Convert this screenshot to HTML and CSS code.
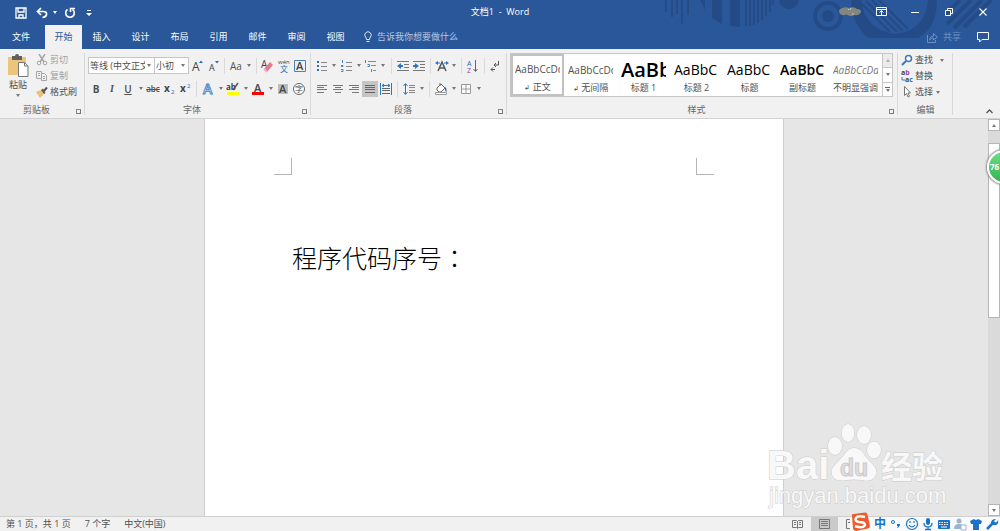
FILE: index.html
```html
<!DOCTYPE html>
<html lang="zh-CN">

<head>
    <meta charset="UTF-8">
    <meta name="viewport" content="width=device-width, initial-scale=1.0">
    <title>文档1 - Word</title>
    <link rel="stylesheet" href="styles.css">
</head>

<body>
    <header class="header">
        <svg class="pattern" width="350" height="49" viewBox="0 0 350 49">
            <g fill="none" stroke="#244b85" stroke-width="3">
                <path d="M16 0v12M22 0v17M27 0v14M32 0v24M38 0v15" stroke-width="2"></path>
                <path d="M96 0v26M100 0v26M104 0v25M108 0v23M112 0v20M116 0v16M120 0v12M123 0v5" stroke-width="2"></path>
                <circle cx="178" cy="16" r="13" stroke-width="4"></circle>
                <path d="M296 14l14-14M297 24l24-24M304 28l28-28M314 27l27-27" stroke-width="4"></path>
            </g>
            <g fill="#244b85">
                <path d="M50 0h5v10zM62 0h10v24l-10-6zM80 0h10v27l-10-1z"></path>
                <path d="M129 0h20a10 9 0 0 1-20 0z"></path>
                <circle cx="178" cy="16" r="6"></circle>
                <path d="M201 0h10q4 30 34 34q30-3 33-34h9q0 28-19 38h-49q-17-12-18-38z"></path>
            </g>
            <path d="M211 3l29 29M216 1l31 31M222 0l31 31M229 0l29 29" fill="none" stroke="#244b85" stroke-width="2"></path>
        </svg>
        <div class="titlebar">
            <div class="quick">
                <button class="save" aria-label="保存"><svg width="12" height="12" viewBox="0 0 12 12"><path d="M1 1h10v10H1zM3 1v4h6V1M4 11V8h4v3" fill="none" stroke="#fff" stroke-width="1.3"></path></svg></button>
                <button aria-label="撤消"><svg width="12" height="12" viewBox="0 0 12 12"><path d="M5 1L1.500 4.500L5 8M2 4.500h5q4 0 3.500 3q-.5 2.500-4 3" fill="none" stroke="#fff" stroke-width="1.700"></path></svg></button>
                <button class="drop light" aria-label="撤消选项"></button>
                <button class="redo" aria-label="重复"><svg width="12" height="12" viewBox="0 0 12 12"><path d="M3.500 2.500a4.300 4.300 0 1 0 5 0M6.500 5V1.500H11" fill="none" stroke="#fff" stroke-width="1.600"></path></svg></button>
                <button class="custom" aria-label="自定义快速访问工具栏"><svg width="6" height="6" viewBox="0 0 6 6"><path d="M1 0h4v1H1zM0 3h6L3 6z" fill="#fff"></path></svg></button>
            </div>
            <h1>文档1  -  Word</h1>
            <div class="winctl">
                <svg class="user" width="22" height="10" viewBox="0 0 22 10"><path d="M1 2q5-3 9-1q5-2 8 1q5 0 3.500 4q-2 3-6 2q-4 2-8-.5Q3 9 1 7q-2-3 0-5z" fill="#85857f"></path><path d="M9 2l1 1M12 1l-1 2M13 7h2" stroke="#c5c5c0"></path></svg>
                <button aria-label="功能区显示选项"><svg width="11" height="9" viewBox="0 0 11 9"><path d="M.5 .5h10v8H.5zM.5 2.500h10M5.500 8V4M3.500 5.500l2-2l2 2" fill="none" stroke="#fff"></path></svg></button>
                <button aria-label="最小化"><svg width="8" height="8" viewBox="0 0 8 8"><path d="M0 4.500h8" stroke="#fff"></path></svg></button>
                <button aria-label="还原"><svg width="8" height="8" viewBox="0 0 8 8"><path d="M.5 2.500h5v5h-5zM2.500 2V.5h5v5H6" fill="none" stroke="#fff"></path></svg></button>
                <button aria-label="关闭"><svg width="8" height="8" viewBox="0 0 8 8"><path d="M.5 .5l7 7M7.500 .5l-7 7" stroke="#fff" stroke-width="1.100"></path></svg></button>
            </div>
        </div>
        <nav class="tabs">
            <button class="file">文件</button>
            <button class="active">开始</button>
            <button>插入</button>
            <button>设计</button>
            <button>布局</button>
            <button>引用</button>
            <button>邮件</button>
            <button>审阅</button>
            <button>视图</button>
            <label class="tellme">
                <svg width="8" height="12" viewBox="0 0 8 12"><path d="M2.500 8.500q0-1.500-1-2.500a3.200 3.200 0 1 1 5 0q-1 1-1 2.500zM2.500 10.500h3" fill="none" stroke="#dce5f3"></path></svg>
                <input type="text" placeholder="告诉我你想要做什么" aria-label="告诉我你想要做什么">
            </label>
            <button class="share"><svg width="11" height="11" viewBox="0 0 11 11"><path d="M.5 3v7.500h8V8M2.500 8q.5-4 4-4V1.500l4 3.500l-4 3V6q-2.500 0-4 2z" fill="none" stroke="#6d8fc2"></path></svg>共享</button>
            <button class="comment" aria-label="批注"><svg width="12" height="11" viewBox="0 0 12 11"><path d="M.5 .5h11v7H5l-2.500 2.500V7.500h-2z" fill="none" stroke="#fff"></path></svg></button>
        </nav>
    </header>

    <section class="ribbon">
        <div class="group clipboard">
            <div class="group-body">
                <button class="paste">
                    <svg width="22" height="24" viewBox="0 0 22 24"><path d="M1 3h18v18H1z" fill="#edc47c"></path><path d="M5 2h3q0-2 2-2t2 2h3v4H5z" fill="#606060"></path><path d="M11.500 8.500h6l3.500 3.500v10.500h-9.500z" fill="#fff" stroke="#777"></path><path d="M17.500 8.500v3.500h3.500" fill="none" stroke="#777"></path></svg>
                    <span>粘贴</span>
                    <i class="tri"></i>
                </button>
                <div class="stack">
                    <button class="off"><svg width="12" height="12" viewBox="0 0 12 12"><path d="M3 0l5 8M9 0L4 8" stroke="#a5a5a5" stroke-width="1.500"></path><g fill="none" stroke="#a5a5a5"><circle cx="3" cy="9" r="1.800"></circle><circle cx="9" cy="9" r="1.800"></circle></g></svg>剪切</button>
                    <button class="off"><svg width="12" height="12" viewBox="0 0 12 12"><path d="M.5 1.500h5v7h-5zM5.500 3.500h3l2 2v5h-5zM2 3.500h2M2 5.500h2M7 6.500h2M7 8.500h2" fill="#f1f1f1" stroke="#a5a5a5"></path></svg>复制</button>
                    <button><svg width="12" height="12" viewBox="0 0 12 12"><path d="M0 6l5-2l3 4l-4 4z" fill="#edc07a"></path><path d="M5 4l3 4l1.500-1L7 2.500z" fill="#555"></path><path d="M8 5l3-3.500" stroke="#555" stroke-width="2"></path></svg>格式刷</button>
                </div>
            </div>
            <div class="label">剪贴板<button class="launch" aria-label="剪贴板设置"></button></div>
        </div>

        <div class="group font">
            <div class="group-body rows">
                <div class="row">
                    <span class="combo name"><select aria-label="字体"><option>等线 (中文正文)</option></select></span>
                    <span class="combo size"><select aria-label="字号"><option>小初</option></select></span>
                    <button class="ib" aria-label="增大字号"><svg viewBox="0 0 16 16"><text x="3" y="13" font-size="12">A</text><path d="M10 5l2-2.500L14 5z" fill="#2b6cb5"></path></svg></button>
                    <button class="ib" aria-label="减小字号"><svg viewBox="0 0 16 16"><text x="4" y="13" font-size="9">A</text><path d="M10 3l2 2.500L14 3z" fill="#2b6cb5"></path></svg></button>
                    <i class="sep"></i>
                    <button class="ib" aria-label="更改大小写">Aa</button><button class="drop" aria-label="大小写选项"></button>
                    <i class="sep"></i>
                    <button class="ib" aria-label="清除格式"><svg viewBox="0 0 16 16"><text x="1" y="10" font-size="10">A</text><path d="M4 11l6-7l3 3l-6 7z" fill="#e8798c"></path><path d="M4 11l3 3" stroke="#f3b9c2" stroke-width="2"></path></svg></button>
                    <button class="ib" aria-label="拼音指南"><svg viewBox="0 0 16 16"><text x="2" y="6" font-size="6">wén</text><text x="4" y="14" font-size="8" class="blue">文</text></svg></button>
                    <button class="ib" aria-label="字符边框"><svg viewBox="0 0 16 16"><path d="M2.500 2.500h11v11h-11z" fill="none" stroke="#4a7fbd"></path><text x="4" y="12" font-size="11" font-weight="600">A</text></svg></button>
                </div>
                <div class="row">
                    <button class="ib bold">B</button>
                    <button class="ib italic">I</button>
                    <button class="ib under">U</button><button class="drop" aria-label="下划线选项"></button>
                    <button class="ib strike">abc</button>
                    <button class="ib" aria-label="下标"><svg viewBox="0 0 16 16"><text x="3" y="11" font-size="10" font-weight="700">x</text><text x="10" y="13" font-size="6" class="blue">2</text></svg></button>
                    <button class="ib" aria-label="上标"><svg viewBox="0 0 16 16"><text x="3" y="11" font-size="10" font-weight="700">x</text><text x="10" y="7" font-size="6" class="blue">2</text></svg></button>
                    <i class="sep"></i>
                    <button class="ib" aria-label="文本效果"><svg viewBox="0 0 16 16"><text x="3" y="13" font-size="14" font-weight="600" class="effect">A</text></svg></button><button class="drop" aria-label="文本效果选项"></button>
                    <button class="ib" aria-label="突出显示"><svg viewBox="0 0 16 16"><text x="1" y="9" font-size="8" font-weight="700">ab</text><path d="M8 9l5-7" stroke="#555" stroke-width="1.500"></path><path d="M2 11h12v3H2z" fill="#ffff00"></path></svg></button><button class="drop" aria-label="突出显示选项"></button>
                    <button class="ib" aria-label="字体颜色"><svg viewBox="0 0 16 16"><text x="4" y="11" font-size="11" font-weight="600">A</text><path d="M2 11h12v3H2z" fill="#ff0000"></path></svg></button><button class="drop" aria-label="字体颜色选项"></button>
                    <button class="ib" aria-label="字符底纹"><svg viewBox="0 0 16 16"><path d="M3 3h10v10H3z" fill="#bcbcbc"></path><text x="4" y="12" font-size="11" font-weight="600">A</text></svg></button>
                    <button class="ib" aria-label="带圈字符"><svg viewBox="0 0 16 16"><circle cx="8" cy="8" r="5.500" fill="#fff" stroke="#666"></circle><text x="4" y="11" font-size="8">字</text></svg></button>
                </div>
            </div>
            <div class="label">字体<button class="launch" aria-label="字体设置"></button></div>
        </div>

        <div class="group para">
            <div class="group-body rows">
                <div class="row">
                    <button class="ib" aria-label="项目符号"><svg viewBox="0 0 16 16"><path d="M3 3h2v2H3zM3 7h2v2H3zM3 11h2v2H3z" fill="#2b6cb5"></path><path d="M7 4.500h6M7 8.500h6M7 12.500h6" stroke="#888"></path></svg></button><button class="drop" aria-label="项目符号选项"></button>
                    <button class="ib" aria-label="编号"><svg viewBox="0 0 16 16"><path d="M3.500 2v3M2 7.500h2v1H2M2 11.500h2v2H2" fill="none" stroke="#4a86c5"></path><path d="M7 4.500h6M7 8.500h6M7 12.500h6" stroke="#888"></path></svg></button><button class="drop" aria-label="编号选项"></button>
                    <button class="ib" aria-label="多级列表"><svg viewBox="0 0 16 16"><path d="M2.500 2v3M4.500 6.500h2v2h-2M8.500 11v3" fill="none" stroke="#4a86c5"></path><path d="M5 3.500h8M8 7.500h5M10 12.500h3" stroke="#888"></path></svg></button><button class="drop" aria-label="多级列表选项"></button>
                    <i class="sep"></i>
                    <button class="ib" aria-label="减少缩进量"><svg viewBox="0 0 16 16"><path d="M2 3.500h12M9 6.500h5M9 9.500h5M2 12.500h12" stroke="#777"></path><path d="M2 8l4-3v2h2v2H6v2z" fill="#2b78c2"></path></svg></button>
                    <button class="ib" aria-label="增加缩进量"><svg viewBox="0 0 16 16"><path d="M2 3.500h12M9 6.500h5M9 9.500h5M2 12.500h12" stroke="#777"></path><path d="M8 8L4 5v2H2v2h2v2z" fill="#2b78c2"></path></svg></button>
                    <i class="sep"></i>
                    <button class="ib" aria-label="中文版式"><svg viewBox="0 0 16 16"><path d="M4 13l4-9l4 9M5.500 10h5" fill="none" stroke="#555" stroke-width="1.500"></path><path d="M1 5l3-2v4zM15 5l-3-2v4z" fill="#2b78c2"></path><path d="M3 5h3M10 5h3" stroke="#2b78c2"></path></svg></button><button class="drop" aria-label="中文版式选项"></button>
                    <i class="sep"></i>
                    <button class="ib" aria-label="排序"><svg viewBox="0 0 16 16"><text x="2" y="8" font-size="7" class="blue">A</text><text x="2" y="15" font-size="7" class="purple">Z</text><path d="M10.500 2v11M8.500 11l2 2.500l2-2.500" fill="none" stroke="#666"></path></svg></button>
                    <i class="sep"></i>
                    <button class="ib" aria-label="显示编辑标记"><svg viewBox="0 0 16 16"><path d="M10.500 3v4H6M8 5L6 7l2 2M7 11.500H3M5 9.500l-2 2l2 2" fill="none" stroke="#555"></path></svg></button>
                </div>
                <div class="row">
                    <button class="ib" aria-label="左对齐"><svg viewBox="0 0 16 16"><path d="M3 4.500h10M3 6.500h7M3 8.500h10M3 11.500h7" stroke="#777"></path></svg></button>
                    <button class="ib" aria-label="居中"><svg viewBox="0 0 16 16"><path d="M3 4.500h10M5 6.500h6M3 8.500h10M5 11.500h6" stroke="#777"></path></svg></button>
                    <button class="ib" aria-label="右对齐"><svg viewBox="0 0 16 16"><path d="M3 4.500h10M6 6.500h7M3 8.500h10M6 11.500h7" stroke="#777"></path></svg></button>
                    <button class="ib pressed" aria-label="两端对齐"><svg viewBox="0 0 16 16"><path d="M3 4.500h10M3 6.500h10M3 8.500h10M3 11.500h10" stroke="#666"></path></svg></button>
                    <button class="ib" aria-label="分散对齐"><svg viewBox="0 0 16 16"><path d="M2.500 2v12M13.500 2v12M4 4.500h8M6 3l-2 1.500L6 6M10 3l2 1.500L10 6" fill="none" stroke="#2b78c2"></path><path d="M4 7.500h8M4 9.500h8M4 12.500h8" stroke="#666"></path></svg></button>
                    <i class="sep"></i>
                    <button class="ib" aria-label="行距"><svg viewBox="0 0 16 16"><path d="M4.500 3v10M2.500 5l2-2.500l2 2.500M2.500 11l2 2.500l2-2.500" fill="none" stroke="#2b78c2"></path><path d="M8 4.500h6M8 6.500h6M8 9.500h6M8 11.500h6" stroke="#888"></path></svg></button><button class="drop" aria-label="行距选项"></button>
                    <i class="sep"></i>
                    <button class="ib" aria-label="底纹"><svg viewBox="0 0 16 16"><path d="M4 7l4-4l4 4l-4 4H6L4 9zM7 5V2" fill="#fff" stroke="#666"></path><path d="M12 6q2 1 1.500 5q-2-1-1.500-5z" fill="#2b6cb5"></path><path d="M2.500 11.500h11v2h-11z" fill="#fff" stroke="#999"></path></svg></button><button class="drop" aria-label="底纹选项"></button>
                    <button class="ib" aria-label="边框"><svg viewBox="0 0 16 16"><path d="M3.500 3.500h9v9h-9zM8 4v8M4 8h8" fill="#fff" stroke="#999"></path></svg></button><button class="drop" aria-label="边框选项"></button>
                </div>
            </div>
            <div class="label">段落<button class="launch" aria-label="段落设置"></button></div>
        </div>

        <div class="group styles">
            <div class="group-body">
                <div class="gallery">
                    <button class="style selected"><span class="sample">AaBbCcDd</span><span class="cap"><small>↲</small> 正文</span></button>
                    <button class="style"><span class="sample">AaBbCcDd</span><span class="cap"><small>↲</small> 无间隔</span></button>
                    <button class="style"><span class="sample big">AaBb</span><span class="cap">标题 1</span></button>
                    <button class="style"><span class="sample mid">AaBbC</span><span class="cap">标题 2</span></button>
                    <button class="style"><span class="sample mid">AaBbC</span><span class="cap">标题</span></button>
                    <button class="style"><span class="sample mid heavy">AaBbC</span><span class="cap">副标题</span></button>
                    <button class="style"><span class="sample slant">AaBbCcDd</span><span class="cap">不明显强调</span></button>
                    <div class="spin">
                        <button class="dim" aria-label="上一行"><i class="tri up"></i></button>
                        <button aria-label="下一行"><i class="tri"></i></button>
                        <button class="more" aria-label="其他"><i class="tri"></i></button>
                    </div>
                </div>
            </div>
            <div class="label">样式<button class="launch" aria-label="样式设置"></button></div>
        </div>

        <div class="group edit">
            <div class="group-body">
                <div class="stack">
                    <button><svg width="12" height="12" viewBox="0 0 12 12"><circle cx="7.500" cy="4.500" r="3" fill="#fff" stroke="#3b78bd" stroke-width="1.500"></circle><path d="M5 7l-4 4" stroke="#3b78bd" stroke-width="2"></path></svg>查找<i class="tri far"></i></button>
                    <button><svg width="12" height="12" viewBox="0 0 12 12"><text x="0" y="5" font-size="7" font-weight="700">a<tspan class="purple">b</tspan></text><text x="4" y="12" font-size="7" font-weight="700">a<tspan class="blue">c</tspan></text><path d="M1 7v3h3" fill="none" stroke="#3b78bd"></path></svg>替换</button>
                    <button><svg width="12" height="12" viewBox="0 0 12 12"><path d="M3.500 .5v9l2-2l1.500 3.500l1.500-.7L7 7h2.500z" fill="#fff" stroke="#777"></path></svg>选择<i class="tri"></i></button>
                </div>
            </div>
            <div class="label">编辑</div>
        </div>
        <button class="collapse" aria-label="折叠功能区"><svg width="7" height="5" viewBox="0 0 7 5"><path d="M.5 4l3-3l3 3" fill="none" stroke="#555" stroke-width="1.300"></path></svg></button>
    </section>

    <main class="workspace">
        <div class="canvas">
            <article class="page">
                <div class="crops"><i class="crop left"></i><i class="crop right"></i></div>
                <p>程序代码序号<span class="punct" lang="zh-TW">：</span></p>
            </article>
        </div>
        <div class="scroll">
            <button aria-label="向上滚动"><i class="tri up"></i></button>
            <div class="thumb"></div>
            <button class="down" aria-label="向下滚动"><i class="tri"></i></button>
        </div>
        <div class="ball">76</div>
        <svg class="watermark" width="190" height="95" viewBox="0 0 190 95">
            <g class="mark">
                <text x="2" y="59" font-size="40" font-weight="700">Bai</text>
                <ellipse cx="70" cy="26" rx="7" ry="9"></ellipse>
                <ellipse cx="83" cy="13" rx="6.500" ry="9"></ellipse>
                <ellipse cx="99" cy="15" rx="7" ry="9"></ellipse>
                <ellipse cx="109" cy="30" rx="7" ry="8.500"></ellipse>
                <path d="M89 28q7 0 11 8l9 10q5 7 0 12q-4 4-12 2q-8-1-16 0q-9 2-13-3q-4-6 2-12l9-10q4-7 10-7z"></path>
                <text x="116" y="58" font-size="31" font-weight="700">经验</text>
                <text x="4" y="83" font-size="22">jingyan.baidu.com</text>
            </g>
            <text class="du" x="75" y="56" font-size="23" font-weight="700">du</text>
        </svg>
    </main>

    <footer class="status">
        <span>第 1 页，共 1 页</span>
        <span>7 个字</span>
        <span>中文(中国)</span>
        <div class="views">
            <button aria-label="阅读视图"><svg width="11" height="10" viewBox="0 0 11 10"><path d="M.5 1.500h4l1 1l1-1h4v7h-4l-1 1l-1-1h-4zM5.500 2v7M2 3.500h2M2 5.500h2M7 3.500h2M7 5.500h2" fill="none" stroke="#777"></path></svg></button>
            <button class="on" aria-label="页面视图"><svg width="11" height="10" viewBox="0 0 11 10"><path d="M.5 .5h10v9H.5zM2 2.500h7M2 4.500h7M2 6.500h7" fill="none" stroke="#777"></path></svg></button>
            <button aria-label="Web 版式视图"><svg width="11" height="10" viewBox="0 0 11 10"><path d="M.5 .5h10v9H.5zM2 3.500h7" fill="none" stroke="#777"></path></svg></button>
        </div>
        <div class="ime">
            <button class="sogou" aria-label="搜狗输入法"><svg width="20" height="19" viewBox="0 0 20 19"><path d="M2 4Q1 2 4 2l11-1.500q2 0 2.500 2L20 14q0 2-2 2.500L6 19q-2 0-3-2z" fill="#f1592a"></path><path d="M15 5Q8 3 6 6t3 4q6 0 6 3q-2 4-10 1" fill="none" stroke="#fff" stroke-width="2.500"></path></svg></button>
            <button class="cn">中</button>
            <button aria-label="标点"><svg viewBox="0 0 14 14"><circle cx="4" cy="5" r="1.500" fill="none" stroke="#1a73c8"></circle><path d="M8 7h3q0 3-3 4l1-2H8z" fill="#1a73c8"></path></svg></button>
            <button aria-label="表情"><svg viewBox="0 0 14 14"><g fill="none" stroke="#1a73c8" stroke-width="1.200"><circle cx="7" cy="7" r="5.500"></circle><path d="M4 8q3 4 6 0M5 4v2M9 4v2"></path></g></svg></button>
            <button aria-label="语音"><svg viewBox="0 0 14 14"><rect x="5" y="1" width="4" height="7" rx="2" fill="#1a73c8"></rect><path d="M3 6q0 4 4 4t4-4M7 10v3M4 12.500h6" fill="none" stroke="#1a73c8" stroke-width="1.300"></path></svg></button>
            <button aria-label="软键盘"><svg viewBox="0 0 14 14"><rect x="1" y="3" width="12" height="9" rx="1" fill="#1a73c8"></rect><path d="M2 5.500h10M2 7.500h10" stroke="#fff" stroke-dasharray="1.500 1"></path><path d="M4 10h6" stroke="#fff"></path></svg></button>
            <button aria-label="账号"><svg viewBox="0 0 14 14"><circle cx="6" cy="4" r="2.500" fill="#9db4d0"></circle><path d="M1 12q0-5 5-5t5 5z" fill="#9db4d0"></path><path d="M8 8h5v5H8z" fill="#fff" stroke="#9db4d0"></path></svg></button>
            <button aria-label="皮肤"><svg viewBox="0 0 14 14"><path d="M5 2q2 2 4 0l4 2l-1 3h-2v6H4V7H2L1 4z" fill="#1a73c8"></path></svg></button>
            <button aria-label="工具箱"><svg viewBox="0 0 14 14"><path d="M2 12l6-6" stroke="#1a73c8" stroke-width="2.500"></path><path d="M11 2L9 4l1 1.500L12 5l1-2q1 4-2 5t-5-2q0-4 5-4z" fill="#1a73c8"></path></svg></button>
        </div>
    </footer>
</body>

</html>
```
FILE: styles.css
```css
* {
    box-sizing: border-box;
    margin: 0;
    padding: 0;
}

body {
    display: flex;
    flex-direction: column;
    height: 100vh;
    overflow: hidden;
    font: 9px/12px "Open Sans", "Noto Sans CJK SC", sans-serif;
    color: #505050;
    background-color: #e6e6e6;
}

button,
input,
select {
    font: inherit;
    color: inherit;
    border: none;
    background: none;
}

button {
    display: flex;
    align-items: center;
    justify-content: center;
    white-space: nowrap;
}

svg {
    display: block;
    flex: none;
}

/* 标题栏 */
.header {
    position: relative;
    flex: none;
    background-color: #2a579a;
    color: #fff;
}

.pattern {
    position: absolute;
    top: 0;
    right: 0;
}

.titlebar {
    position: relative;
    display: grid;
    grid-template-columns: 1fr auto 1fr;
    align-items: center;
    height: 25px;
}

.titlebar h1 {
    font-size: 9px;
    font-weight: 400;
    white-space: pre;
    padding-bottom: 2px;
}

.quick {
    display: flex;
    padding-left: 15px;
}

.save {
    margin-right: 9px;
}

.redo {
    margin-left: 3px;
}

.custom {
    margin-left: 10px;
}

.winctl {
    display: flex;
    justify-content: flex-end;
    align-items: center;
    padding-bottom: 2px;
}

.winctl button {
    width: 34px;
    height: 22px;
}

.user {
    margin-right: 3px;
}

.tabs {
    position: relative;
    display: flex;
    height: 24px;
}

.tabs button {
    width: 39px;
    height: 24px;
}

.tabs .file {
    width: 45px;
    padding-right: 3px;
}

.tabs .active {
    width: 37px;
    background-color: #f1f1f1;
    color: #2a579a;
}

.tellme {
    display: flex;
    align-items: center;
    gap: 5px;
    margin-left: 9px;
}

.tellme input {
    width: 120px;
}

.tellme input::placeholder {
    color: #b8c8e2;
}

.tabs .share {
    width: auto;
    gap: 5px;
    margin-left: auto;
    color: #6d8fc2;
}

.tabs .comment {
    width: 34px;
    margin-left: 5px;
}

/* 小三角 */
.tri,
.drop::after,
.combo::after {
    content: "";
    display: block;
    flex: none;
    border: 2px solid transparent;
    border-top: 3px solid #777;
    border-bottom: 0;
}

.tri.up {
    border-top: 0;
    border-bottom: 3px solid #777;
}

.drop {
    width: 9px;
    height: 16px;
}

.drop.light::after {
    border-top-color: #fff;
}

.quick .drop {
    height: 12px;
    margin: 0 2px;
}

/* 功能区 */
.ribbon {
    display: flex;
    flex: none;
    background-color: #f1f1f1;
    border-bottom: 1px solid #d2d2d2;
}

.group {
    position: relative;
    flex: none;
    padding: 0 3px;
}

.group::after {
    content: "";
    position: absolute;
    top: 4px;
    right: 0;
    bottom: 3px;
    width: 1px;
    background-color: #d8d8d8;
}

.group-body {
    display: flex;
    height: 51px;
}

.rows {
    flex-direction: column;
    justify-content: flex-end;
}

.row {
    display: flex;
    align-items: center;
    height: 23px;
}

.label {
    display: flex;
    justify-content: center;
    align-items: center;
    height: 18px;
    padding: 2px 12px 0 0;
    color: #666;
}

.launch {
    position: absolute;
    right: 4px;
    bottom: 4px;
    width: 5px;
    height: 5px;
    border-top: 1px solid #888;
    border-left: 1px solid #888;
}

.launch::after {
    content: "";
    position: absolute;
    right: 0;
    bottom: 0;
    width: 3px;
    height: 3px;
    border-right: 1px solid #777;
    border-bottom: 1px solid #777;
}

.clipboard {
    width: 85px;
}

.clipboard .group-body {
    gap: 3px;
}

.paste {
    flex-direction: column;
    justify-content: flex-start;
    width: 30px;
    padding-top: 5px;
}

.paste span {
    line-height: 14px;
}

.paste .tri {
    margin-top: 2px;
}

.stack {
    display: flex;
    flex-direction: column;
    padding-top: 3px;
}

.stack button {
    justify-content: flex-start;
    gap: 2px;
    height: 16px;
}

.stack .tri {
    margin-left: 1px;
}

.stack .tri.far {
    margin-left: 5px;
}

.stack .off {
    color: #a0a0a0;
}

.ib {
    width: 16px;
    height: 16px;
    font-size: 10px;
}

.ib svg {
    width: 16px;
    height: 16px;
}

svg text {
    fill: #444;
}

svg .blue {
    fill: #2b6cb5;
}

svg .purple {
    fill: #8c4aa8;
}

svg .effect {
    fill: #fff;
    stroke: #4a86c5;
}

.bold {
    font-weight: 700;
}

.italic {
    font-family: "Liberation Serif", serif;
    font-style: italic;
    font-weight: 700;
}

.under {
    font-weight: 600;
    text-decoration: underline;
}

.strike {
    font-size: 8px;
    font-weight: 600;
    text-decoration: line-through;
}

.pressed {
    background-color: #c5c5c5;
}

.sep {
    width: 1px;
    height: 16px;
    margin: 0 3px;
    background-color: #dadada;
}

.combo {
    position: relative;
    height: 17px;
    border: 1px solid #c6c6c6;
    background-color: #fff;
}

.combo::after {
    position: absolute;
    top: 6px;
    right: 3px;
}

.combo select {
    appearance: none;
    display: block;
    height: 15px;
    padding-left: 1px;
}

.combo.name {
    width: 67px;
}

.combo.name select {
    width: 56px;
}

.combo.size {
    width: 34px;
    border-left: 0;
}

.combo.size select {
    width: 33px;
}

.font {
    width: 226px;
}

.para {
    width: 196px;
}

.styles {
    flex: 0 1 391px;
    min-width: 0;
}

.gallery {
    display: flex;
    flex: 1;
    min-width: 0;
    height: 44px;
    margin: 4px 2px 0 0;
    background-color: #fff;
    border: 1px solid #c6c6c6;
}

.style {
    flex: 1 1 0;
    flex-direction: column;
    align-items: stretch;
    min-width: 0;
    padding: 0 4px;
}

.style.selected {
    padding: 0 2px;
    border: 2px solid #c1c1c1;
}

.sample {
    height: 26px;
    font-size: 10px;
    line-height: 28px;
    text-align: left;
    overflow: hidden;
}

.selected .sample {
    height: 24px;
    line-height: 24px;
}

.sample.big {
    font-size: 20px;
    font-weight: 600;
    color: #000;
}

.sample.mid {
    font-size: 14px;
    color: #000;
}

.sample.heavy {
    font-weight: 600;
}

.sample.slant {
    font-style: italic;
    color: #777;
}

.cap small {
    font-size: 7px;
}

.spin {
    display: flex;
    flex: none;
    flex-direction: column;
    width: 10px;
    border-left: 1px solid #c6c6c6;
}

.spin button {
    flex: 1;
    flex-direction: column;
}

.spin button + button {
    border-top: 1px solid #c6c6c6;
}

.spin .dim {
    background-color: #e1e1e1;
    opacity: .6;
}

.spin .more::before {
    content: "";
    width: 5px;
    height: 1px;
    margin-bottom: 1px;
    background-color: #666;
}

.edit {
    width: 55px;
}

.edit .label {
    padding-right: 0;
}

.collapse {
    align-self: flex-end;
    margin-left: auto;
    padding: 4px 7px;
}

/* 编辑区 */
.workspace {
    position: relative;
    display: flex;
    flex: 1;
    min-height: 0;
}

.canvas {
    display: flex;
    flex: 1;
    justify-content: center;
}

.page {
    width: 100%;
    max-width: 580px;
    padding-top: 39px;
    background-color: #fff;
    border: solid #cfcfcf;
    border-width: 0 1px;
}

.page p {
    margin-top: 64px;
    padding: 0 87px;
    font-family: "Noto Sans CJK SC", sans-serif;
    font-weight: 300;
    font-size: 25px;
    line-height: 36px;
    color: #000;
}

.punct {
    font-family: "Noto Sans CJK TC", sans-serif;
}

.crops {
    display: flex;
    justify-content: space-between;
    padding: 0 69px;
}

.crop {
    width: 18px;
    height: 17px;
    border-bottom: 1px solid #b5b5b5;
}

.crop.left {
    border-right: 1px solid #b5b5b5;
}

.crop.right {
    border-left: 1px solid #b5b5b5;
}

.scroll {
    display: flex;
    flex-direction: column;
    width: 12px;
    background-color: #dadada;
}

.scroll button {
    height: 12px;
    background-color: #fff;
    border: 1px solid #b5b5b5;
}

.thumb {
    height: 44%;
    margin-top: 12px;
    background-color: #fff;
    border: 1px solid #b5b5b5;
}

.scroll .down {
    margin-top: auto;
}

.ball {
    position: absolute;
    top: 31px;
    right: -21px;
    width: 34px;
    height: 34px;
    padding-left: 1px;
    border: 2px solid #fff;
    border-radius: 50%;
    background: linear-gradient(#6fdc85, #2fb74f);
    box-shadow: 0 0 2px 1px #888;
    color: #fff;
    font-size: 8px;
    font-weight: 700;
    line-height: 30px;
}

.watermark {
    position: absolute;
    right: 45px;
    bottom: 1px;
    font-family: "Liberation Sans", "Noto Sans CJK SC", sans-serif;
}

.mark,
.mark text {
    fill: #f8f8f8;
    stroke: #cbcbcb;
    stroke-width: 1px;
    paint-order: stroke;
}

.watermark .du {
    fill: #dedede;
    stroke: #cbcbcb;
}

/* 状态栏 */
.status {
    position: relative;
    display: flex;
    flex: none;
    align-items: center;
    gap: 14px;
    height: 15px;
    padding-left: 6px;
    background-color: #f1f1f1;
    border-top: 1px solid #d0d0d0;
}

.views {
    display: flex;
    margin-left: auto;
    padding-right: 135px;
}

.views button {
    width: 27px;
    height: 14px;
}

.views .on {
    background-color: #cacaca;
}

.ime {
    position: absolute;
    right: 0;
    bottom: 0;
    display: flex;
    align-items: center;
    height: 14px;
    background-color: #f8fafc;
}

.ime button {
    width: 16px;
    height: 14px;
}

.ime button svg {
    width: 14px;
    height: 14px;
}

.ime .sogou {
    width: 20px;
    height: 19px;
    margin: -5px 2px 0 0;
}

.ime .sogou svg {
    width: 20px;
    height: 19px;
}

.ime .cn {
    color: #1a73c8;
    font-size: 12px;
    font-weight: 700;
}
```
